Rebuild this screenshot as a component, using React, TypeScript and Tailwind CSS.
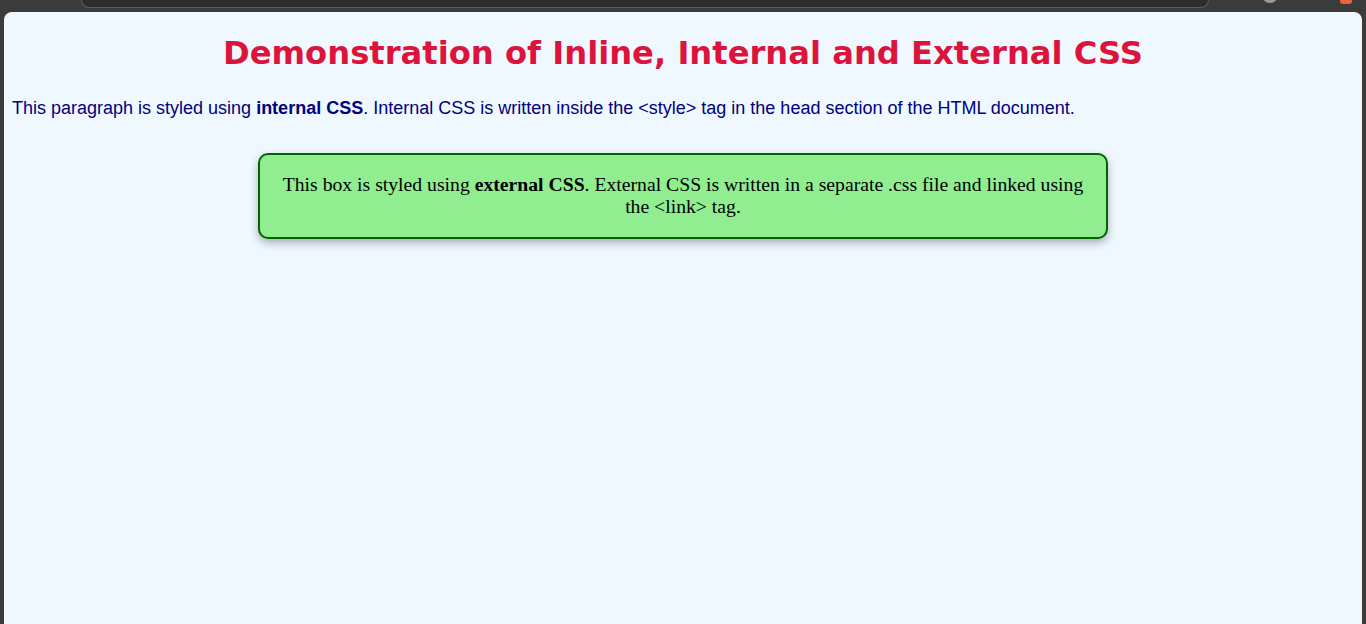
export default function App() {
  return (
    <div className="flex h-[624px] w-[1366px] flex-col overflow-hidden bg-[#3b3b3b]">
      {/* browser chrome remnants */}
      <div className="flex h-[12px] shrink-0 items-start">
        <div className="ml-[81px] h-[8px] w-[1128px] rounded-b-[12px] border-x border-b border-[#5e5e5e] bg-[#2c2c2c]" />
        <div className="ml-[53px] -mt-[13px] h-[16px] w-[16px] rounded-full bg-[#9a9a9a]" />
        <div className="ml-[62px] -mt-[8px] h-[12px] w-[12px] rounded-[3px] bg-[#e8643a]" />
      </div>

      <div className="mx-[4px] flex-1 rounded-t-[8px] bg-[#f0f8ff] px-[8px]">
        <h1
          className="pt-[22px] text-center text-[32.2px] font-bold leading-[39px] text-[#dc143c]"
          style={{ fontFamily: "Verdana, 'DejaVu Sans', sans-serif" }}
        >
          Demonstration of Inline, Internal and External CSS
        </h1>

        <p
          className="mt-[25px] text-[18px] leading-[21px] text-[#000080]"
          style={{ fontFamily: "Arial, 'Liberation Sans', sans-serif" }}
        >
          This paragraph is styled using <strong>internal CSS</strong>. Internal CSS is written inside the
          &lt;style&gt; tag in the head section of the HTML document.
        </p>

        <div
          className="mx-auto mt-[34px] w-[850px] rounded-[10px] border-2 border-[#006400] bg-[#90ee90] px-[20px] pt-[18px] pb-[20px] text-center text-[19.7px] leading-[22px] text-black shadow-[0_4px_8px_rgba(0,0,0,0.3)]"
          style={{ fontFamily: "Georgia, 'Liberation Serif', serif" }}
        >
          This box is styled using <strong>external CSS</strong>. External CSS is written in a separate .css
          file and linked using
          <br />
          the &lt;link&gt; tag.
        </div>
      </div>
    </div>
  );
}
